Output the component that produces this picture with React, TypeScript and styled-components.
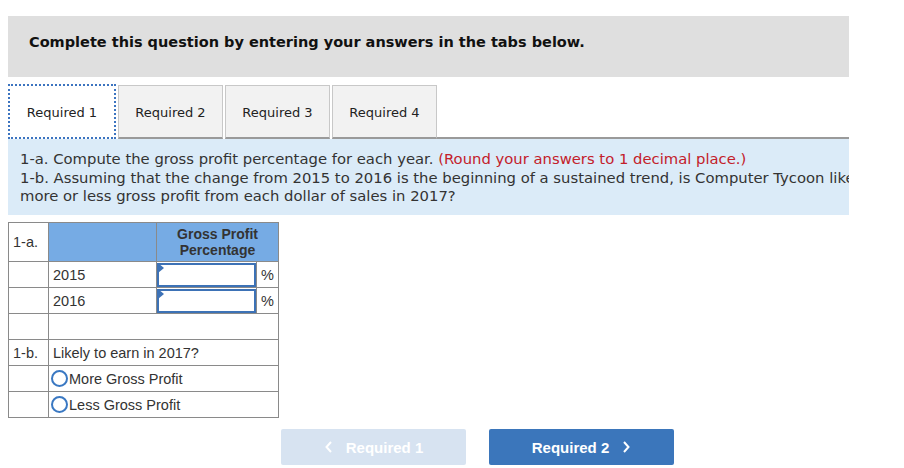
import styled, { createGlobalStyle } from "styled-components";

const GlobalStyle = createGlobalStyle`
  body {
    margin: 0;
    background: #ffffff;
    font-family: "DejaVu Sans", Verdana, sans-serif;
  }
`;

const tabs = ["Required 1", "Required 2", "Required 3", "Required 4"];

const rows = [
  { year: "2015" },
  { year: "2016" },
];

function App() {
  return (
    <>
      <GlobalStyle />
      <Page>
        <Banner>Complete this question by entering your answers in the tabs below.</Banner>

        <TabBar>
          {tabs.map((t, i) => (
            <Tab key={t} $active={i === 0}>
              {t}
            </Tab>
          ))}
          <TabFill />
        </TabBar>

        <Instructions>
          <Line>
            1-a. Compute the gross profit percentage for each year.{" "}
            <Red>(Round your answers to 1 decimal place.)</Red>
          </Line>
          <Line>
            1-b. Assuming that the change from 2015 to 2016 is the beginning of a sustained trend, is
            Computer Tycoon like
          </Line>
          <Line>more or less gross profit from each dollar of sales in 2017?</Line>
        </Instructions>

        <Table>
          <tbody>
            <HeadRow>
              <LabelCell>1-a.</LabelCell>
              <HeadCell />
              <HeadCell colSpan={2} $center>
                Gross Profit
                <br />
                Percentage
              </HeadCell>
            </HeadRow>
            {rows.map((r) => (
              <tr key={r.year}>
                <LabelCell />
                <Cell>{r.year}</Cell>
                <InputCell>
                  <Marker />
                  <Field type="text" />
                </InputCell>
                <PctCell>%</PctCell>
              </tr>
            ))}
            <tr>
              <LabelCell />
              <Cell colSpan={3} />
            </tr>
            <tr>
              <LabelCell>1-b.</LabelCell>
              <Cell colSpan={3}>Likely to earn in 2017?</Cell>
            </tr>
            {["More Gross Profit", "Less Gross Profit"].map((o) => (
              <tr key={o}>
                <LabelCell />
                <Cell colSpan={3}>
                  <Option>
                    <Radio />
                    {o}
                  </Option>
                </Cell>
              </tr>
            ))}
          </tbody>
        </Table>

        <Nav>
          <NavButton $disabled>
            <Chevron viewBox="0 0 10 16">
              <path d="M7 3 L2.5 8 L7 13" />
            </Chevron>
            Required 1
          </NavButton>
          <NavButton>
            Required 2
            <Chevron viewBox="0 0 10 16">
              <path d="M3 3 L7.5 8 L3 13" />
            </Chevron>
          </NavButton>
        </Nav>
      </Page>
    </>
  );
}

const Page = styled.div`
  width: 841px;
  padding: 16px 0 0 8px;
`;

const Banner = styled.div`
  height: 61px;
  box-sizing: border-box;
  background: #dfdfdf;
  padding: 17px 0 0 21px;
  font-size: 14.5px;
  line-height: 18px;
  font-weight: bold;
  color: #111;
`;

const TabBar = styled.div`
  display: flex;
  align-items: flex-end;
  margin-top: 7px;
  height: 55px;
`;

const Tab = styled.div<{ $active?: boolean }>`
  box-sizing: border-box;
  height: ${(p) => (p.$active ? "55px" : "54px")};
  width: ${(p) => (p.$active ? "108px" : "105px")};
  margin-right: 2px;
  display: flex;
  align-items: center;
  justify-content: center;
  font-size: 13px;
  color: #222;
  background: ${(p) => (p.$active ? "#fff" : "#f2f2f2")};
  border: ${(p) => (p.$active ? "2px dotted #3c74c0" : "1px solid #c8c8c8")};
  border-bottom: ${(p) => (p.$active ? "2px dotted #3c74c0" : "2px solid #9a9a9a")};
  padding-top: 2px;
`;

const TabFill = styled.div`
  flex: 1;
  border-bottom: 2px solid #9a9a9a;
  margin-left: -2px;
`;

const Instructions = styled.div`
  background: #dbebf8;
  height: 76px;
  box-sizing: border-box;
  padding: 11px 0 0 12px;
  overflow: hidden;
  color: #333;
  font-size: 14.8px;
  line-height: 18.5px;
`;

const Line = styled.div`
  white-space: nowrap;
`;

const Red = styled.span`
  color: #c3202a;
`;

const Table = styled.table`
  margin-top: 7px;
  border-collapse: collapse;
  font-family: "Liberation Sans", Arial, sans-serif;
  font-size: 14.5px;
  color: #333;
  td {
    border: 1px solid #8a8a8a;
    height: 26px;
    padding: 0 4px;
    box-sizing: border-box;
  }
`;

const HeadRow = styled.tr`
  td {
    height: 39px;
    vertical-align: top;
  }
`;

const LabelCell = styled.td`
  width: 40px;
  ${HeadRow} & {
    padding-top: 11px;
  }
`;

const HeadCell = styled.td<{ $center?: boolean }>`
  background: #76abe4;
  text-align: ${(p) => (p.$center ? "center" : "left")};
  font-weight: bold;
  font-size: 14px;
  color: #333;
  line-height: 16px;
  padding-top: 3px !important;
`;

const Cell = styled.td`
  width: 108px;
`;

const InputCell = styled.td`
  position: relative;
  width: 100px;
  padding: 0 !important;
`;

const Field = styled.input`
  display: block;
  box-sizing: border-box;
  width: 100%;
  height: 24px;
  border: 2px solid #3d72b6;
  margin: 0;
  outline: none;
`;

const Marker = styled.span`
  position: absolute;
  left: 1px;
  top: 1px;
  width: 0;
  height: 0;
  border-top: 5px solid transparent;
  border-bottom: 5px solid transparent;
  border-left: 6px solid #3d72b6;
`;

const PctCell = styled.td`
  width: 22px;
  text-align: center;
  padding: 0 !important;
`;

const Option = styled.label`
  display: flex;
  align-items: center;
  margin-left: -2px;
`;

const Radio = styled.span`
  box-sizing: border-box;
  width: 17px;
  height: 17px;
  border: 2px solid #3a78c2;
  border-radius: 50%;
  margin-right: 1px;
`;

const Nav = styled.div`
  display: flex;
  gap: 23px;
  margin: 11px 0 0 273px;
`;

const NavButton = styled.div<{ $disabled?: boolean }>`
  width: 185px;
  height: 36px;
  border-radius: 2px;
  display: flex;
  align-items: center;
  justify-content: center;
  gap: 12px;
  font-family: "Liberation Sans", Arial, sans-serif;
  font-size: 15px;
  font-weight: bold;
  color: #fff;
  background: ${(p) => (p.$disabled ? "#d7e3f1" : "#3b76bb")};
`;

const Chevron = styled.svg`
  width: 10px;
  height: 16px;
  fill: none;
  stroke: #fff;
  stroke-width: 2;
`;

export default App;
